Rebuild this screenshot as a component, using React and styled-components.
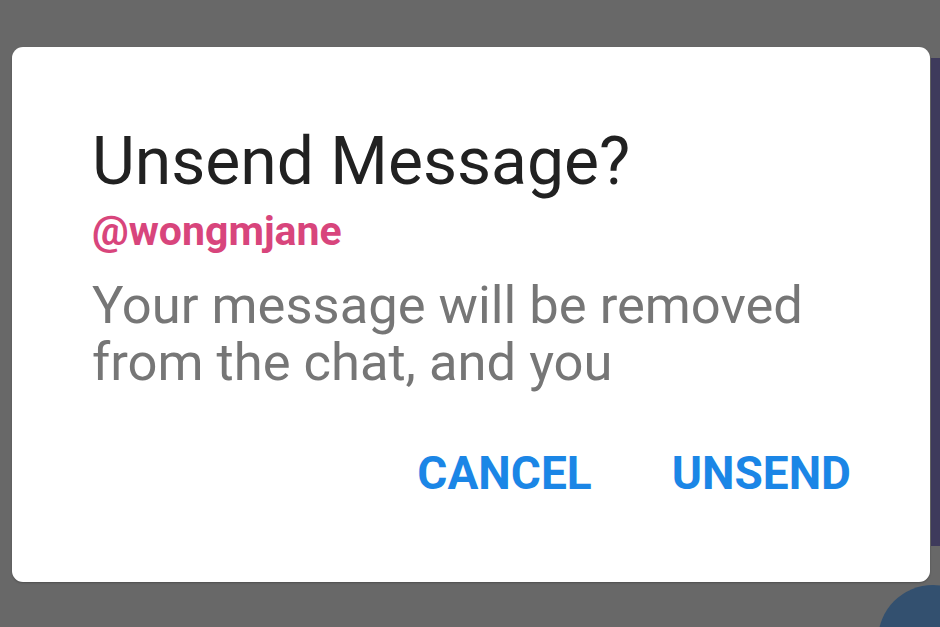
import styled, { createGlobalStyle } from 'styled-components';

const GlobalStyle = createGlobalStyle`
  html, body {
    margin: 0;
    padding: 0;
  }
  body {
    font-family: Roboto, 'Liberation Sans', Arial, sans-serif;
  }
`;

function App() {
  return (
    <Screen>
      <GlobalStyle />
      <SideStrip />
      <Fab />
      <Dialog>
        <Title>Unsend Message?</Title>
        <Handle>@wongmjane</Handle>
        <Body>
          Your message will be removed
          <br />
          from the chat, and you
        </Body>
        <Actions>
          <ActionButton type="button">CANCEL</ActionButton>
          <ActionButton type="button">UNSEND</ActionButton>
        </Actions>
      </Dialog>
    </Screen>
  );
}

export default App;

const Screen = styled.div`
  position: relative;
  width: 940px;
  height: 627px;
  overflow: hidden;
  background-color: #686868;
  padding: 47px 10px 0 12px;
  box-sizing: border-box;
`;

// bits of the chat screen showing through the dimmed backdrop
const SideStrip = styled.div`
  position: absolute;
  right: 0;
  top: 58px;
  width: 9px;
  height: 488px;
  background-color: #3e3a5c;
`;

const Fab = styled.div`
  position: absolute;
  right: -48px;
  top: 585px;
  width: 110px;
  height: 110px;
  border-radius: 50%;
  background-color: #33506f;
`;

const Dialog = styled.div`
  position: relative;
  width: 918px;
  height: 535px;
  box-sizing: border-box;
  padding: 75px 79px 0 80px;
  background-color: #ffffff;
  border-radius: 11px;
  box-shadow: 0 1px 2px rgba(0, 0, 0, 0.25);
`;

const Title = styled.h1`
  margin: 0;
  font-size: 66px;
  line-height: 80px;
  font-weight: 400;
  color: #212121;
`;

const Handle = styled.div`
  margin-top: 5px;
  font-size: 41px;
  line-height: 48px;
  font-weight: 700;
  color: #d8457c;
`;

const Body = styled.p`
  margin: 22px 0 0;
  font-size: 52.5px;
  line-height: 57px;
  color: #767676;
`;

const Actions = styled.div`
  display: flex;
  justify-content: flex-end;
  gap: 80px;
  margin-top: 55px;
`;

const ActionButton = styled.button`
  padding: 0;
  border: none;
  background: none;
  font-family: inherit;
  font-size: 46px;
  line-height: 54px;
  font-weight: 700;
  color: #1b86e6;
  cursor: pointer;
`;
